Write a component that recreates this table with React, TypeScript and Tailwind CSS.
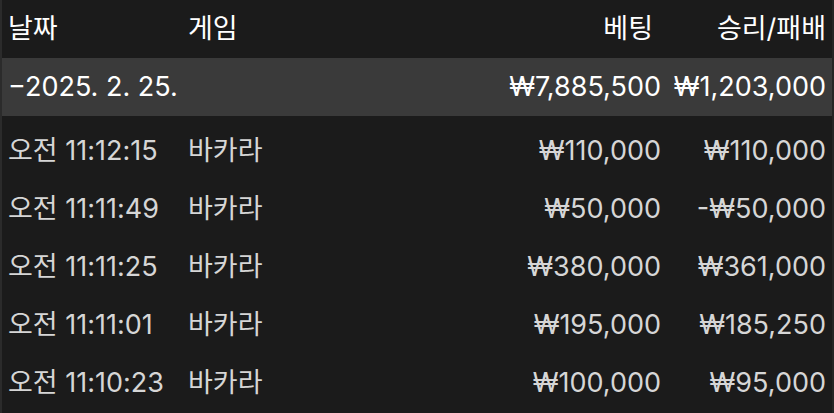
const rows = [
  { time: "오전 11:12:15", game: "바카라", bet: "₩110,000", result: "₩110,000" },
  { time: "오전 11:11:49", game: "바카라", bet: "₩50,000", result: "-₩50,000" },
  { time: "오전 11:11:25", game: "바카라", bet: "₩380,000", result: "₩361,000" },
  { time: "오전 11:11:01", game: "바카라", bet: "₩195,000", result: "₩185,250" },
  { time: "오전 11:10:23", game: "바카라", bet: "₩100,000", result: "₩95,000" },
];

const font = { fontFamily: "Inter, 'Noto Sans CJK KR', sans-serif" };

export default function App() {
  return (
    <div
      className="w-[834px] h-[413px] overflow-hidden bg-[#1b1b1b] border-l-2 border-l-[#2b2b2b] border-r-2 border-r-[#252525] text-[27px]"
      style={font}
    >
      {/* 헤더 */}
      <div className="grid grid-cols-[180px_1fr_200px_165px] items-center h-[58px] pl-[6px] pr-[6px] text-white">
        <span>날짜</span>
        <span>게임</span>
        <span className="text-right pr-2">베팅</span>
        <span className="text-right">승리/패배</span>
      </div>

      {/* 날짜 그룹 */}
      <div className="grid grid-cols-[180px_1fr_200px_165px] items-center h-[58px] pl-[6px] pr-[6px] bg-[#3a3a3a] text-white">
        <span className="col-span-2">−2025. 2. 25.</span>
        <span className="text-right">₩7,885,500</span>
        <span className="text-right">₩1,203,000</span>
      </div>

      <div className="mt-[6px]">
        {rows.map((r) => (
          <div
            key={r.time}
            className="grid grid-cols-[180px_1fr_200px_165px] items-center h-[58px] pl-[6px] pr-[6px] text-[#d6d6d6]"
          >
            <span>{r.time}</span>
            <span>{r.game}</span>
            <span className="text-right">{r.bet}</span>
            <span className="text-right">{r.result}</span>
          </div>
        ))}
      </div>
    </div>
  );
}
